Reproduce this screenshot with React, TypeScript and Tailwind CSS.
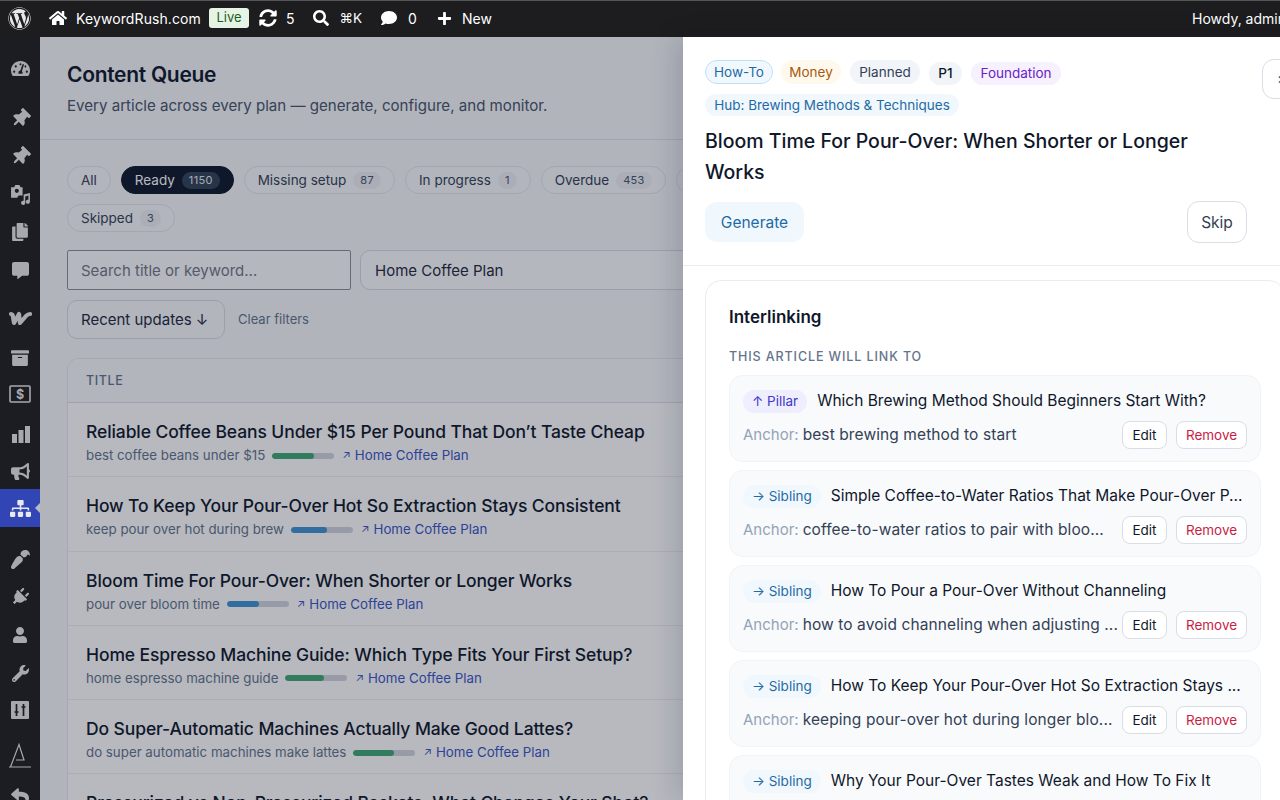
import React from "react";
import {
  FaWordpress, FaHome, FaSyncAlt, FaSearch, FaComment, FaPlus, FaTachometerAlt, FaThumbtack, FaCopy,
  FaArchive, FaBullhorn, FaSitemap, FaPaintBrush, FaPlug, FaUser, FaWrench, FaReply, FaCommentAlt,
} from "react-icons/fa";

const Media = () => (
  <svg width="21" height="21" viewBox="0 0 20 20" fill="currentColor">
    <path d="M1 3h3l1-2h4l1 2h2v8H8.5a3 3 0 0 0-1.5 2H1z" />
    <circle cx="6.5" cy="6.5" r="2" fill="#1c1d22" />
    <path d="M13 10l6-1.5V17a2 2 0 1 1-1.5-2v-4l-3 .8V18a2 2 0 1 1-1.5-2z" />
  </svg>
);
const Wmark = () => (
  <svg width="24" height="16" viewBox="0 0 24 16" fill="none" stroke="currentColor" strokeWidth="4.2" strokeLinejoin="round" strokeLinecap="round">
    <path d="M3 4c1 0 2 1 2 3l1 6 5-9 1 9 6-7c1-1 2-2 4-2" />
  </svg>
);
const Money = () => (
  <svg width="22" height="18" viewBox="0 0 22 18" fill="none">
    <rect x="1" y="1" width="20" height="16" rx="1" stroke="currentColor" strokeWidth="1.6" />
    <text x="11" y="14" textAnchor="middle" fontSize="12.5" fontWeight="700" fill="currentColor" fontFamily="Inter">$</text>
  </svg>
);
const Bars = () => (
  <svg width="19" height="19" viewBox="0 0 19 19" fill="currentColor">
    <rect x="1" y="9" width="5" height="9" />
    <rect x="7.5" y="5" width="5" height="13" />
    <rect x="14" y="1" width="5" height="17" />
  </svg>
);
const Sliders = () => (
  <svg width="18" height="18" viewBox="0 0 18 18">
    <rect width="18" height="18" rx="1" fill="currentColor" />
    <path d="M5.5 3v12M3.5 11h4M12.5 3v12M10.5 6h4" stroke="#1c1d22" strokeWidth="1.7" />
  </svg>
);
const Tri = () => (
  <svg width="24" height="26" viewBox="0 0 24 26" fill="none" stroke="currentColor" strokeWidth="1.2">
    <path d="M1 24h22M2.5 24L11 1.5 16 17H8" />
  </svg>
);

type Item = { i: React.ReactNode; mt?: string; active?: boolean };
const side: Item[] = [
  { i: <FaTachometerAlt size={19} /> },
  { i: <FaThumbtack size={19} className="rotate-45" />, mt: "mt-3" },
  { i: <FaThumbtack size={19} className="rotate-45" /> },
  { i: <Media /> },
  { i: <FaCopy size={18} /> },
  { i: <FaCommentAlt size={17} /> },
  { i: <Wmark />, mt: "mt-[10px]" },
  { i: <FaArchive size={18} />, mt: "mt-[2px]" },
  { i: <Money />, mt: "-mt-[2px]" },
  { i: <Bars />, mt: "mt-[2px]" },
  { i: <FaBullhorn size={19} />, mt: "-mt-[1px]" },
  { i: <FaSitemap size={21} />, mt: "-mt-[1px]", active: true },
  { i: <FaPaintBrush size={19} className="rotate-180" />, mt: "mt-[13px]" },
  { i: <FaPlug size={18} className="rotate-45" /> },
  { i: <FaUser size={16} /> },
  { i: <FaWrench size={17} /> },
  { i: <Sliders />, mt: "-mt-[1px]" },
  { i: <Tri />, mt: "mt-2" },
  { i: <FaReply size={18} />, mt: "mt-[2px]" },
];

const row1: [string, string?, boolean?][] = [
  ["All"],
  ["Ready", "1150", true],
  ["Missing setup", "87"],
  ["In progress", "1"],
  ["Overdue", "453"],
];

const Chip = ({ l, n, on }: { l: string; n?: string; on?: boolean }) => (
  <span className={`h-[28px] px-[13px] shrink-0 rounded-full flex items-center gap-[7px] text-[13.5px] border ${on ? "bg-[#0f172a] border-[#0f172a] text-white" : "bg-[#f8f9fb] border-[#e2e5ea] text-[#334155]"}`}>
    <span className="pt-[1px]">{l}</span>
    {n && (
      <span className={`h-[17px] px-[7px] rounded-full flex items-center text-[11px] tracking-[0.3px] ${on ? "bg-[#334155] text-[#e2e8f0]" : "bg-[#eef0f4] text-[#475569]"}`}>{n}</span>
    )}
  </span>
);

const rows: [string, string, number, string][] = [
  ["Reliable Coffee Beans Under $15 Per Pound That Don’t Taste Cheap", "best coffee beans under $15", 68, "bg-[#3fa873]"],
  ["How To Keep Your Pour-Over Hot So Extraction Stays Consistent", "keep pour over hot during brew", 58, "bg-[#3f93d1]"],
  ["Bloom Time For Pour-Over: When Shorter or Longer Works", "pour over bloom time", 52, "bg-[#3f93d1]"],
  ["Home Espresso Machine Guide: Which Type Fits Your First Setup?", "home espresso machine guide", 62, "bg-[#3fa873]"],
  ["Do Super-Automatic Machines Actually Make Good Lattes?", "do super automatic machines make lattes", 66, "bg-[#3fa873]"],
  ["Pressurized vs Non-Pressurized Baskets: What Changes Your Shot?", "pressurized vs non pressurized basket", 60, "bg-[#3fa873]"],
];

const links: [string, string, string][] = [
  ["Pillar", "Which Brewing Method Should Beginners Start With?", "best brewing method to start"],
  ["Sibling", "Simple Coffee-to-Water Ratios That Make Pour-Over P...", "coffee-to-water ratios to pair with bloo..."],
  ["Sibling", "How To Pour a Pour-Over Without Channeling", "how to avoid channeling when adjusting ..."],
  ["Sibling", "How To Keep Your Pour-Over Hot So Extraction Stays ...", "keeping pour-over hot during longer blo..."],
  ["Sibling", "Why Your Pour-Over Tastes Weak and How To Fix It", "why your pour-over tastes weak and thin"],
];

export default function App() {
  return (
    <div className="h-screen w-full overflow-hidden flex flex-col bg-[#1d1d1f] font-['Inter',sans-serif]">
      {/* top bar */}
      <div className="h-[37px] shrink-0 bg-[#1d1d1f] border-t border-[#55565a] flex items-center text-white text-[14px] whitespace-nowrap pl-[8px] pb-[2px] overflow-hidden">
        <FaWordpress size={23} className="text-[#e8e8e8]" />
        <FaHome size={18} className="ml-[18px]" />
        <span className="ml-[9px] tracking-[0.1px]">KeywordRush.com</span>
        <span className="ml-[8px] h-[20px] w-[40px] justify-center flex items-center rounded-[3px] bg-[#e6f4e6] text-[#1c5e27] text-[13px]">Live</span>
        <FaSyncAlt size={18} className="ml-[10px]" />
        <span className="ml-[9px]">5</span>
        <FaSearch size={16} className="ml-[19px]" />
        <span className="ml-[10px] text-[13.5px]">⌘K</span>
        <FaComment size={16} className="ml-[19px]" />
        <span className="ml-[11px]">0</span>
        <FaPlus size={15} className="ml-[20px]" />
        <span className="ml-[10px]">New</span>
        <span className="ml-auto w-[88px] overflow-hidden shrink-0">Howdy, admin</span>
      </div>

      <div className="flex-1 flex min-h-0 relative">
        {/* sidebar */}
        <div className="w-10 shrink-0 bg-[#1c1d22] pt-3 text-[#a7a9ae] flex flex-col overflow-hidden">
          {side.map((s, k) => (
            <div
              key={k}
              className={`${s.mt ?? ""} h-[38px] shrink-0 flex items-center justify-center relative ${s.active ? "bg-[#3146b4] text-[#e8e9f0]" : ""}`}
            >
              {s.i}
              {s.active && (
                <span className="absolute right-0 top-[14px] border-y-[5px] border-r-[5px] border-y-transparent border-r-[#b8bac1]" />
              )}
            </div>
          ))}
        </div>

        {/* page */}
        <div className="flex-1 min-w-0 bg-[#f7f8fa] overflow-hidden">
          <div className="h-[103px] border-b border-[#dfe1e7] pl-[27px] pt-[24px]">
            <h1 className="text-[21px] leading-[27px] font-semibold text-[#0f172a] tracking-[-0.3px]">Content Queue</h1>
            <p className="mt-[6px] text-[15.1px] leading-[24px] text-[#475569]">Every article across every plan — generate, configure, and monitor.</p>
          </div>
          <div className="pl-[27px] pt-[26px] w-[720px]">
            <div className="flex gap-[10px]">
              {row1.map(([l, n, on]) => (
                <Chip key={l} l={l} n={n} on={on} />
              ))}
              <span className="h-[28px] w-[40px] shrink-0 rounded-full border border-[#e2e5ea] bg-[#f8f9fb]" />
            </div>
            <div className="flex mt-[10px]">
              <Chip l="Skipped" n="3" />
            </div>
            <div className="flex gap-[9px] mt-[18px] w-[720px]">
              <div className="w-[284px] h-[40px] shrink-0 bg-white/70 border border-[#8c8f94] rounded-[2px] flex items-center px-[13px] pt-[2px] text-[15px] text-[#717784]">Search title or keyword...</div>
              <div className="flex-1 h-[40px] bg-white/70 border border-[#d5dae3] rounded-[10px] flex items-center px-[14px] pt-[2px] text-[15px] text-[#1e293b]">Home Coffee Plan</div>
            </div>
            <div className="flex items-center mt-[10px]">
              <div className="w-[158px] h-[39px] bg-[#f8f9fb] border border-[#d5dae3] rounded-[10px] flex items-center px-[13px] pt-[2px] text-[15px] text-[#1e293b] whitespace-nowrap">Recent updates ↓</div>
              <span className="ml-[13px] text-[13px] text-[#64748b]">Clear filters</span>
            </div>
            <div className="mt-[19px] border border-[#e5e7eb] rounded-tl-[12px] bg-white w-[720px]">
              <div className="h-[44px] border-b border-[#d9deea] bg-[#f8f9fb] rounded-tl-[12px] pl-[18px] pt-[1px] flex items-center text-[12.5px] font-medium tracking-[0.6px] text-[#64748b]">TITLE</div>
              {rows.map(([t, k, p, c]) => (
                <div key={t} className="h-[74.3px] border-b border-[#eef0f4] pl-[18px] pt-[16px] whitespace-nowrap">
                  <div className="text-[17.5px] leading-[26px] text-[#0f172a] font-medium tracking-[-0.1px]">{t}</div>
                  <div className="flex items-center text-[13.3px] leading-[19px] text-[#64748b] mt-[1px]">
                    {k}
                    <span className="ml-[7px] w-[62px] h-[6px] rounded-full bg-[#d1d5de] overflow-hidden">
                      <span className={`block h-full ${c} rounded-full`} style={{ width: `${p}%` }} />
                    </span>
                    <span className="ml-[8px] text-[#3b55c4] flex items-center gap-[4px]"><span className="text-[11px]">↗</span>Home Coffee Plan</span>
                  </div>
                </div>
              ))}
            </div>
          </div>
        </div>

        {/* scrim */}
        <div className="absolute left-10 right-0 top-0 bottom-0 bg-[#0f172a]/30" />

        {/* drawer */}
        <div className="absolute left-[683px] top-0 bottom-0 w-[624px] bg-white shadow-[-8px_0_24px_rgba(15,23,42,0.14)] overflow-hidden">
          <div className="h-[229px] border-b border-[#e9ecf1] pl-[22px] pt-[22px] flex items-start">
            <div className="w-[542px] shrink-0">
              <div className="flex flex-wrap items-center w-[400px] gap-y-[9px] text-[13.5px]">
                <span className="h-[24px] w-[68px] justify-center rounded-full flex items-center bg-[#f0f8fe] border border-[#bfe0f5] text-[#1f6aa5]">How-To</span>
                <span className="ml-[8px] h-[24px] w-[60px] justify-center rounded-full flex items-center bg-[#fff8ec] text-[#a8590f]">Money</span>
                <span className="ml-[9px] h-[24px] w-[70px] justify-center rounded-full flex items-center bg-[#f1f4f8] text-[#334155]">Planned</span>
                <span className="ml-[9px] h-[23px] w-[33px] justify-center mt-[3px] rounded-full flex items-center bg-[#f1f4f8] text-[#0f172a] font-medium">P1</span>
                <span className="ml-[9px] h-[23px] w-[90px] justify-center mt-[3px] rounded-full flex items-center bg-[#f6f0ff] text-[#6b21c8]">Foundation</span>
                <span className="h-[22px] w-[254px] justify-center rounded-full flex items-center bg-[#f0f8fe] text-[#1f6aa5]">Hub: Brewing Methods &amp; Techniques</span>
              </div>
              <h2 className="mt-[10px] w-[500px] text-[19.5px] leading-[31px] font-medium text-[#0f172a]">Bloom Time For Pour-Over: When Shorter or Longer Works</h2>
              <div className="mt-[13px] flex items-center justify-between">
                <span className="w-[99px] h-[40px] pt-[1px] rounded-[12px] bg-[#f0f8fe] text-[#1f6aa5] text-[15.5px] flex items-center justify-center">Generate</span>
                <span className="w-[60px] h-[42px] pt-[1px] rounded-[12px] border border-[#d9dee6] text-[#334155] text-[15.5px] flex items-center justify-center">Skip</span>
              </div>
            </div>
            <span className="ml-[15px] w-[40px] h-[40px] rounded-[12px] border border-[#d9dee6] text-[#334155] text-[15px] flex items-center pl-[14px]">×</span>
          </div>
          <div className="ml-[22px] mt-[14px] w-[580px] h-[600px] border border-[#e9ecf1] rounded-[16px] pl-[23px] pr-[23px] pt-[22px]">
            <h3 className="text-[17px] leading-[28px] font-semibold text-[#0f172a]">Interlinking</h3>
            <div className="mt-[16px] text-[12.5px] leading-[20px] font-medium tracking-[0.9px] text-[#64748b]">THIS ARTICLE WILL LINK TO</div>
            <div className="mt-[8px] flex flex-col gap-[8px]">
              {links.map(([b, t, a], idx) => (
                <div key={idx} className="h-[87px] bg-[#f9fafc] border border-[#f1f3f7] rounded-[14px] pl-[13px] pr-[13px] pt-[13px] whitespace-nowrap">
                  <div className="flex items-center h-[24px]">
                    <span className={`h-[23px] px-[9px] rounded-full flex items-center gap-[4px] text-[13.5px] ${b === "Pillar" ? "bg-[#eeeefe] text-[#4338ca]" : "bg-[#f0f8fe] text-[#1f6aa5]"}`}>
                      {b === "Pillar" ? "↑" : "→"} {b}
                    </span>
                    <span className="ml-[10px] text-[15.5px] text-[#0f172a]">{t}</span>
                  </div>
                  <div className="flex items-center mt-[8px] h-[28px]">
                    <span className="text-[15px] text-[#94a3b8]">Anchor:</span>
                    <span className="ml-[4px] text-[15.5px] text-[#334155] tracking-[0.1px]">{a}</span>
                    <span className="ml-auto w-[45px] h-[28px] rounded-[8px] border border-[#d9dee6] bg-white text-[13.5px] text-[#0f172a] flex items-center justify-center">Edit</span>
                    <span className="ml-[9px] w-[71px] h-[28px] rounded-[8px] border border-[#d9dee6] bg-white text-[13.5px] text-[#c81e45] flex items-center justify-center">Remove</span>
                  </div>
                </div>
              ))}
            </div>
          </div>
        </div>
      </div>
    </div>
  );
}
